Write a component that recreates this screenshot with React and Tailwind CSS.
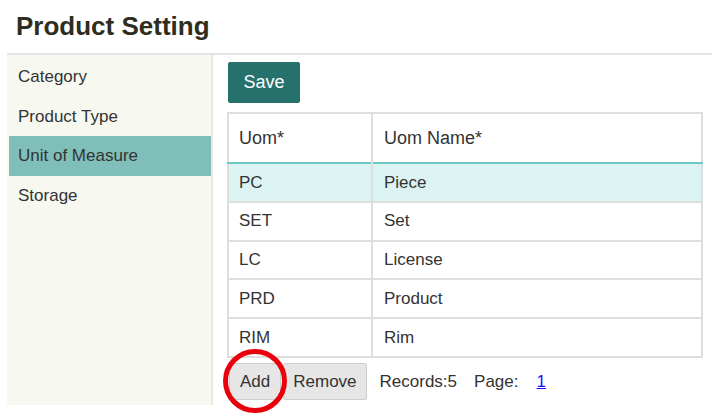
const MENU = ['Category', 'Product Type', 'Unit of Measure', 'Storage'];

const UOMS = [
  { code: 'PC', name: 'Piece' },
  { code: 'SET', name: 'Set' },
  { code: 'LC', name: 'License' },
  { code: 'PRD', name: 'Product' },
  { code: 'RIM', name: 'Rim' },
];

export default function App() {
  return (
    <div className="relative w-[712px] h-[414px] overflow-hidden bg-white text-[#333] font-['Liberation_Sans',Arial,sans-serif]">
      {/* Title */}
      <h1 className="h-[53px] pl-4 flex items-center text-[26px] font-bold text-[#2f2e1e]">Product Setting</h1>

      <div className="ml-[7px] flex h-[352px] border-t-2 border-[#e4e4e4]">
        {/* Side menu */}
        <div className="w-[206px] pt-[2px] bg-[#f7f9f1] border-r-2 border-[#e8eae2]">
          {MENU.map((item) => (
            <div
              key={item}
              className={`h-[39.5px] ml-[2px] pl-[9px] flex items-center text-[17px] ${
                item === 'Unit of Measure' ? 'bg-[#80beb9]' : ''
              }`}
            >
              {item}
            </div>
          ))}
        </div>

        {/* Content */}
        <div className="flex-1 pl-[14px] pr-[9px] pt-[7px]">
          <button className="h-[41px] w-[72px] ml-[1px] rounded-[2px] bg-[#27716c] text-white text-[18px]">Save</button>

          <table className="mt-[9px] w-full border-collapse border-2 border-[#dedede] text-[17px]">
            <thead>
              <tr className="h-[50px] border-b-2 border-[#6ccac4]">
                <th className="w-[144px] pl-[10px] text-left font-normal text-[18px] border-r-2 border-[#dedede]">Uom*</th>
                <th className="pl-[11px] text-left font-normal text-[18px]">Uom Name*</th>
              </tr>
            </thead>
            <tbody>
              {UOMS.map((row, i) => (
                <tr key={row.code} className={`h-[38.8px] border-b-2 border-[#dedede] ${i === 0 ? 'bg-[#dcf3f3]' : ''}`}>
                  <td className="pl-[10px] border-r-2 border-[#dedede]">{row.code}</td>
                  <td className="pl-[11px]">{row.name}</td>
                </tr>
              ))}
            </tbody>
          </table>

          {/* Footer */}
          <div className="mt-[5px] flex items-center text-[17px]">
            <button className="h-[37px] ml-[2px] px-[10px] bg-[#e6e6e6] border border-[#cdcdcd] rounded-[2px] text-[#333]">Add</button>
            <button className="h-[37px] ml-[2px] px-[9px] bg-[#e6e6e6] border border-[#cdcdcd] rounded-[2px] text-[#333]">Remove</button>
            <span className="ml-[13px]">Records:5</span>
            <span className="ml-[17px]">Page:</span>
            <a className="ml-[18px] text-[#1a0dff] underline">1</a>
          </div>
        </div>
      </div>

      {/* Annotation circle */}
      <div className="absolute left-[223px] top-[349px] w-[64px] h-[64px] rounded-full border-[5px] border-[#e8000c]" />
    </div>
  );
}
